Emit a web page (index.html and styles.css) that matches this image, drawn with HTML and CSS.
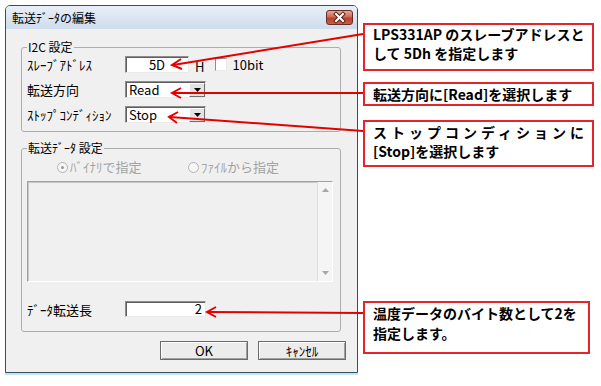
FILE: index.html
```html
<!DOCTYPE html>
<html lang="ja">
<head>
    <meta charset="UTF-8">
    <meta name="viewport" content="width=device-width, initial-scale=1.0">
    <title>転送データの編集</title>
    <link rel="stylesheet" href="styles.css">
</head>
<body>
<div class="page">
    <!-- ダイアログ -->
    <div class="dialog">
        <div class="titlebar">
            <span class="title">転送ﾃﾞｰﾀの編集</span>
            <span class="close-btn">
                <svg width="25" height="13" viewBox="0 0 25 13">
                    <path d="M9 3 L16 10 M16 3 L9 10" stroke="#5b2519" stroke-width="4" stroke-linecap="square"/>
                    <path d="M9 3 L16 10 M16 3 L9 10" stroke="#fff" stroke-width="2" stroke-linecap="square"/>
                </svg>
            </span>
        </div>
        <div class="client">
            <fieldset class="group">
                <legend>I2C 設定</legend>
                <div class="rows">
                    <div class="row">
                        <span class="label">ｽﾚｰﾌﾞｱﾄﾞﾚｽ</span>
                        <span class="edit edit-addr">5D</span>
                        <span class="unit">H</span>
                        <span class="check"></span>
                        <span class="check-label">10bit</span>
                    </div>
                    <div class="row">
                        <span class="label">転送方向</span>
                        <span class="combo">
                            <span class="combo-text">Read</span>
                            <span class="combo-btn"><svg width="7" height="4" viewBox="0 0 7 4"><path d="M0 0 H7 L3.5 4 Z" fill="#000"/></svg></span>
                        </span>
                    </div>
                    <div class="row">
                        <span class="label">ｽﾄｯﾌﾟｺﾝﾃﾞｨｼｮﾝ</span>
                        <span class="combo">
                            <span class="combo-text">Stop</span>
                            <span class="combo-btn"><svg width="7" height="4" viewBox="0 0 7 4"><path d="M0 0 H7 L3.5 4 Z" fill="#000"/></svg></span>
                        </span>
                    </div>
                </div>
            </fieldset>

            <fieldset class="group group-data">
                <legend>転送ﾃﾞｰﾀ 設定</legend>
                <div class="radios">
                    <span class="radio-item"><span class="radio on"></span><span class="radio-text">ﾊﾞｲﾅﾘで指定</span></span>
                    <span class="radio-item"><span class="radio"></span><span class="radio-text">ﾌｧｲﾙから指定</span></span>
                </div>
                <div class="listbox">
                    <div class="scrollbar">
                        <svg width="7" height="4" viewBox="0 0 7 4"><path d="M0 4 H7 L3.5 0 Z" fill="#a8a8a8"/></svg>
                        <svg width="7" height="4" viewBox="0 0 7 4"><path d="M0 0 H7 L3.5 4 Z" fill="#a8a8a8"/></svg>
                    </div>
                </div>
                <div class="row row-length">
                    <span class="label">ﾃﾞｰﾀ転送長</span>
                    <span class="edit edit-length">2</span>
                </div>
            </fieldset>

            <div class="buttons">
                <span class="button">OK</span>
                <span class="button">ｷｬﾝｾﾙ</span>
            </div>
        </div>
    </div>

    <!-- 説明の吹き出し -->
    <div class="notes">
        <div class="note note-addr">
            <span class="line spread">LPS331AP のスレーブアドレスと</span>
            <span class="line">して 5Dh を指定します</span>
        </div>
        <div class="note note-dir">
            <span class="line">転送方向に[Read]を選択します</span>
        </div>
        <div class="note note-stop">
            <span class="line spread">ストップコンディションに</span>
            <span class="line">[Stop]を選択します</span>
        </div>
        <div class="note note-length">
            <span class="line">温度データのバイト数として2を</span>
            <span class="line">指定します。</span>
        </div>
    </div>

    <!-- 矢印 -->
    <svg class="arrows" width="601" height="386" viewBox="0 0 601 386">
        <g stroke="#e50000" stroke-width="2" fill="none">
            <path d="M363 34 L173 65"/>
            <path d="M181 59 L172 65 L182 69"/>
            <path d="M363 93 L173 93"/>
            <path d="M181 88 L172 93 L181 98"/>
            <path d="M363 131 L170 117"/>
            <path d="M178 112 L169 117 L177 123"/>
            <path d="M363 313 L208 312"/>
            <path d="M216 307 L207 312 L216 317"/>
        </g>
    </svg>
</div>
</body>
</html>
```

FILE: styles.css
```css
body {
    margin: 0;
    background: #fff;
    font-family: "Noto Sans CJK JP", sans-serif;
    color: #000;
}
.page {
    position: relative;
    width: 601px;
    height: 386px;
    display: flex;
    align-items: flex-start;
}

/* ダイアログ */
.dialog {
    margin: 5px 0 0 5px;
    width: 353px;
    height: 368px;
    box-sizing: border-box;
    border: 1px solid #3c4c60;
    border-radius: 5px 5px 0 0;
    background: #d9e5f2;
    box-shadow: 0 2px 0 #bfe6f2;
    display: flex;
    flex-direction: column;
}
.titlebar {
    flex: none;
    height: 23px;
    display: flex;
    align-items: center;
    justify-content: space-between;
    padding: 0 4px 0 6px;
    background: linear-gradient(#e8eff8, #cfdcec);
    border-radius: 4px 4px 0 0;
}
.title {
    font-size: 12px;
    line-height: 14px;
}
.close-btn {
    width: 27px;
    height: 15px;
    box-sizing: border-box;
    border: 1px solid #6b2c22;
    border-radius: 3px;
    background: linear-gradient(#e4a898, #cf6a55 45%, #b8412c 55%, #c6604a);
    display: flex;
    align-items: center;
    justify-content: center;
}
.client {
    flex: 1;
    background: #f0f0f0;
    padding: 11px 11px 0 15px;
    font-size: 13px;
}

/* グループ */
.group {
    margin: 0;
    padding: 0 5px 8px 5px;
    width: 320px;
    min-width: 0;
    box-sizing: border-box;
    border: 1px solid #adadad;
    border-radius: 3px;
}
.group legend {
    padding: 0 1px;
    font-size: 12px;
    line-height: 14px;
}
.group-data {
    margin-top: 9px;
    padding-bottom: 14px;
}
.rows {
    display: flex;
    flex-direction: column;
    gap: 8px;
    padding-top: 2px;
}
.row {
    display: flex;
    align-items: center;
    height: 17px;
    line-height: 17px;
}
.label {
    flex: none;
    width: 98px;
}
.edit {
    height: 17px;
    box-sizing: border-box;
    border: 1px solid;
    border-color: #8d8d8d #eaeaea #eaeaea #8d8d8d;
    box-shadow: inset 1px 1px 0 #5e5e5e;
    background: #fff;
    text-align: right;
    line-height: 15px;
}
.edit-addr {
    width: 64px;
    text-align: center;
}
.unit {
    margin: 3px 0 0 6px;
}
.check {
    width: 12px;
    height: 13px;
    margin-left: 11px;
    box-sizing: border-box;
    border: 1px solid;
    border-color: #8d8d8d #eaeaea #eaeaea #8d8d8d;
    background: #fff;
}
.check-label {
    margin-left: 5px;
}
.combo {
    width: 81px;
    height: 17px;
    box-sizing: border-box;
    border: 1px solid;
    border-color: #8d8d8d #eaeaea #eaeaea #8d8d8d;
    box-shadow: inset 1px 1px 0 #5e5e5e;
    background: #fff;
    display: flex;
    line-height: 15px;
}
.combo-text {
    flex: 1;
    padding-left: 3px;
}
.combo-btn {
    width: 16px;
    box-sizing: border-box;
    margin: 1px 0 0 0;
    border: 1px solid;
    border-color: #fff #6e6e6e #6e6e6e #fff;
    background: #e3e3e3;
    display: flex;
    align-items: center;
    justify-content: center;
}

/* ラジオボタン・リスト */
.radios {
    display: flex;
    align-items: center;
    height: 14px;
    margin-top: 5px;
    padding-left: 30px;
    color: #a3a3a3;
}
.radio-item {
    display: flex;
    align-items: center;
    width: 131px;
}
.radio {
    width: 11px;
    height: 11px;
    box-sizing: border-box;
    border: 1px solid #b4b4b4;
    border-radius: 50%;
    background: #f6f6f6;
    display: flex;
    align-items: center;
    justify-content: center;
}
.radio.on::after {
    content: "";
    width: 3px;
    height: 3px;
    border-radius: 50%;
    background: #9a9a9a;
}
.radio-text {
    margin-left: 2px;
    line-height: 14px;
}
.listbox {
    margin-top: 7px;
    width: 306px;
    height: 101px;
    box-sizing: border-box;
    border: 1px solid;
    border-color: #a0a0a0 #fff #fff #a0a0a0;
    box-shadow: inset 1px 1px 0 #c8c8c8;
    background: #f0f0f0;
    display: flex;
    justify-content: flex-end;
}
.scrollbar {
    width: 15px;
    box-sizing: border-box;
    border-left: 1px solid #dedede;
    background: #f5f5f5;
    display: flex;
    flex-direction: column;
    align-items: center;
    justify-content: space-between;
    padding: 6px 0 6px;
}
.row-length {
    margin-top: 19px;
    height: 16px;
}
.edit-length {
    width: 81px;
    height: 16px;
    padding-right: 3px;
    line-height: 14px;
}

/* ボタン */
.buttons {
    display: flex;
    justify-content: flex-end;
    gap: 10px;
    margin-top: 9px;
}
.button {
    width: 88px;
    height: 19px;
    box-sizing: border-box;
    border: 1px solid #6a6a6a;
    box-shadow: inset 1px 1px 0 #fff, inset -1px -1px 0 #a0a0a0;
    background: #ececec;
    text-align: center;
    font-size: 13px;
    line-height: 17px;
}

/* 吹き出し */
.notes {
    margin-left: 5px;
    display: flex;
    flex-direction: column;
    font-size: 14px;
    font-weight: 700;
    line-height: 19px;
}
.note {
    box-sizing: border-box;
    width: 231px;
    border: 2px solid #e3262c;
    background: #fff;
    padding: 0 8px;
    display: flex;
    flex-direction: column;
}
.line {
    display: block;
    white-space: nowrap;
}
.spread {
    text-align: justify;
    text-align-last: justify;
}
.note-addr {
    margin-top: 23px;
    height: 48px;
}
.note-dir {
    margin-top: 11px;
    height: 24px;
    padding-top: 1px;
    line-height: 18px;
}
.note-stop {
    margin-top: 14px;
    height: 47px;
    padding-top: 1px;
}
.note-length {
    margin-top: 134px;
    width: 227px;
    height: 53px;
    line-height: 20px;
}

.arrows {
    position: absolute;
    left: 0;
    top: 0;
    pointer-events: none;
}
```
